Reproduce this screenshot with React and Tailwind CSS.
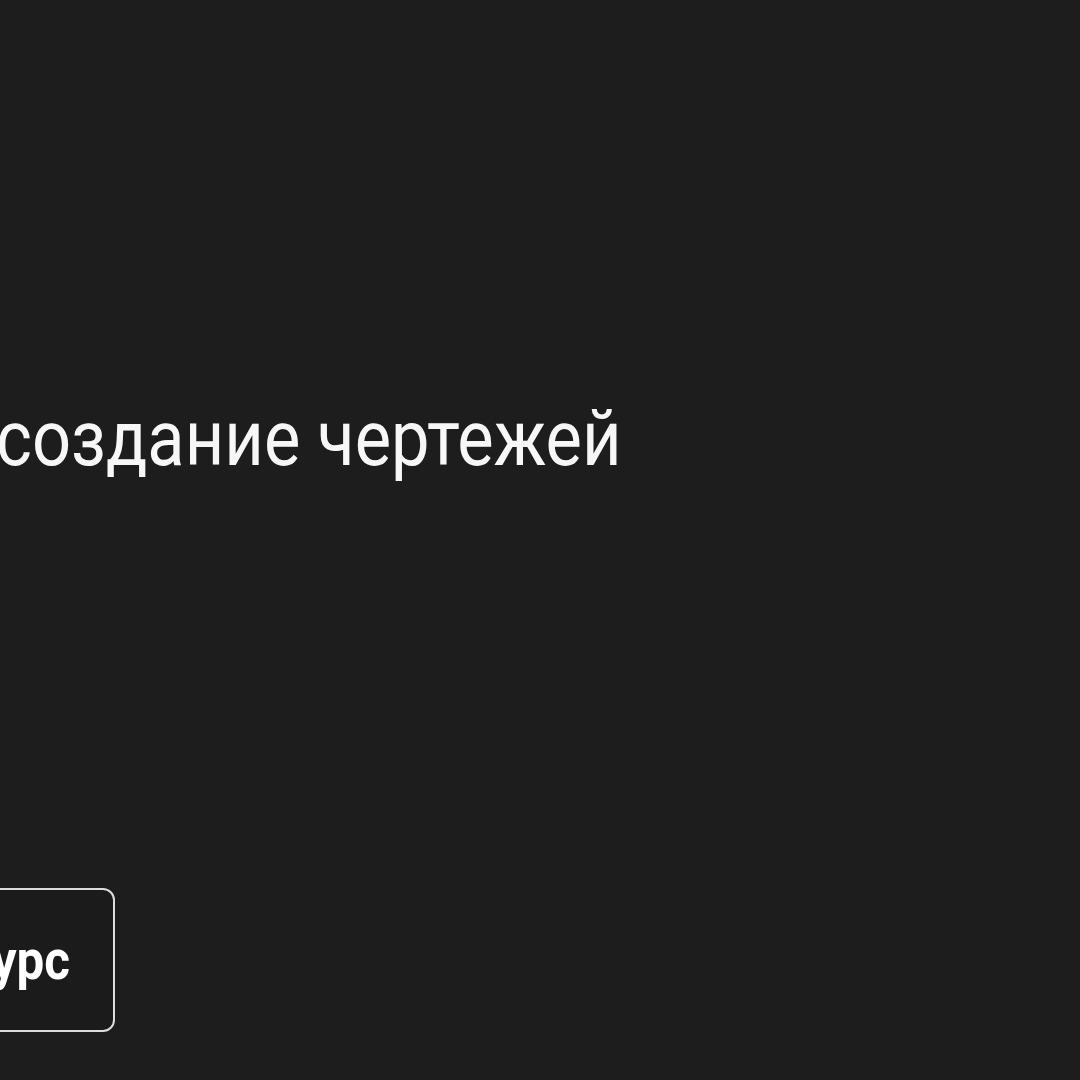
export default function App() {
  return (
    <div
      className="w-[1080px] h-[1080px] bg-[#1d1d1d] overflow-hidden flex flex-col"
      style={{ fontFamily: "Roboto, 'Noto Sans', sans-serif" }}
    >
      <h1 className="mt-[400px] ml-[-4px] h-[78px] text-[78px] leading-none font-normal text-[#f7f7f7] whitespace-nowrap">
        <span className="inline-block origin-left scale-x-[0.88]">создание чертежей</span>
      </h1>
      <div className="mt-[410px] flex">
        <button className="ml-[-80px] h-[144px] w-[195px] rounded-[12px] border-2 border-[#dcdcdc] bg-[#1b1b1b] flex items-center justify-end pr-[43px] text-[56px] font-bold text-white leading-none">
          <span className="inline-block origin-right scale-x-[0.88]">урс</span>
        </button>
      </div>
    </div>
  );
}
